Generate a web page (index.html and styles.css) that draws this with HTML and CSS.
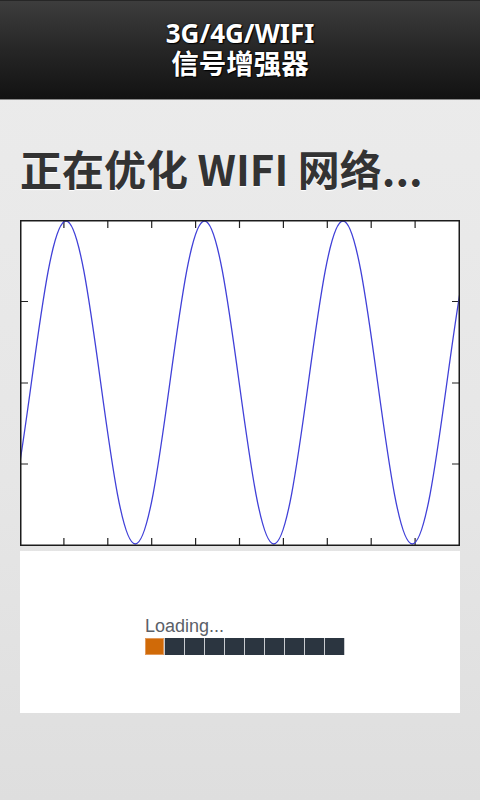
FILE: index.html
```html
<!DOCTYPE html>
<html lang="zh-CN">
<head>
<meta charset="utf-8">
<title>3G/4G/WIFI 信号增强器</title>
<link rel="stylesheet" href="styles.css">
</head>
<body>
<header class="topbar">
  <div class="topbar-title">3G/4G/WIFI<br><span class="cjk">信号增强器</span></div>
</header>
<main class="content">
  <h1 class="status">正在优化 WIFI 网络...</h1>
  <svg class="chart" width="440" height="326" viewBox="0 0 440 326" xmlns="http://www.w3.org/2000/svg">
    <rect x="0" y="0" width="440" height="326" fill="#fff"/>
    <g stroke="#222" stroke-width="1.2">
      <path d="M43.9 1V8M87.8 1V8M131.7 1V8M175.6 1V8M219.5 1V8M263.4 1V8M307.3 1V8M351.2 1V8M395.1 1V8"/>
      <path d="M43.9 325V318M87.8 325V318M131.7 325V318M175.6 325V318M219.5 325V318M263.4 325V318M307.3 325V318M351.2 325V318M395.1 325V318"/>
      <path d="M1 81.5H8M1 163H8M1 244H8M439 81.5H432M439 163H432M439 244H432"/>
    </g>
    <path fill="none" stroke="#4040d8" stroke-width="1.3" d="M-57.85 162.5
      C-46.56 245.24 -35.76 324 -23.225 324
      C-10.69 324 0.11 245.24 11.4 162.5
      C22.69 79.76 33.49 1 46.025 1
      C58.56 1 69.36 79.76 80.65 162.5
      C91.94 245.24 102.74 324 115.275 324
      C127.81 324 138.61 245.24 149.9 162.5
      C161.19 79.76 171.99 1 184.525 1
      C197.06 1 207.86 79.76 219.15 162.5
      C230.44 245.24 241.24 324 253.775 324
      C266.31 324 277.11 245.24 288.4 162.5
      C299.69 79.76 310.49 1 323.025 1
      C335.56 1 346.36 79.76 357.65 162.5
      C368.94 245.24 379.74 324 392.275 324
      C404.81 324 415.61 245.24 426.9 162.5
      C438.19 79.76 448.99 1 461.525 1"/>
    <rect x="0.75" y="0.75" width="438.5" height="324.5" fill="none" stroke="#1c1c1c" stroke-width="1.5"/>
  </svg>
  <section class="loading-box">
    <div class="loading">
      <div class="loading-label">Loading...</div>
      <div class="loading-bar">
        <span class="cell cell-on"></span>
        <span class="cell"></span>
        <span class="cell"></span>
        <span class="cell"></span>
        <span class="cell"></span>
        <span class="cell"></span>
        <span class="cell"></span>
        <span class="cell"></span>
        <span class="cell"></span>
        <span class="cell"></span>
      </div>
    </div>
  </section>
</main>
</body>
</html>
```
FILE: styles.css
```css
html, body {
  margin: 0;
  padding: 0;
}
body {
  width: 480px;
  height: 800px;
  overflow: hidden;
  background: linear-gradient(#ececec, #e6e6e6 60%, #dedede);
  font-family: "Noto Sans", "Noto Sans CJK SC", sans-serif;
}
.topbar {
  height: 100px;
  box-sizing: border-box;
  border-top: 1px solid #262626;
  border-bottom: 1px solid #8a8a8a;
  background: linear-gradient(#3d3d3d, #262626 50%, #121212);
  display: flex;
  justify-content: center;
  padding-top: 18px;
  color: #fff;
  text-shadow: 0 0 2px #000, 1px 1px 1px #000;
}
.topbar-title {
  text-align: center;
  font-family: "Noto Sans", "Noto Sans CJK SC", sans-serif;
  font-size: 26px;
  font-weight: bold;
  line-height: 29px;
}
.cjk {
  font-family: "Noto Sans CJK SC", sans-serif;
  font-size: 27.5px;
}
.content {
  padding: 0 20px;
  display: flex;
  flex-direction: column;
}
.status {
  margin: 43px 0 27px 0;
  height: 50px;
  line-height: 50px;
  font-family: "Noto Sans CJK SC", sans-serif;
  font-size: 42px;
  font-weight: bold;
  color: #333;
  text-shadow: 0 1px 1px #fff;
  white-space: nowrap;
}
.chart {
  display: block;
}
.loading-box {
  margin-top: 5px;
  height: 162px;
  background: #fff;
  display: flex;
  padding-left: 125px;
  padding-top: 66px;
  box-sizing: border-box;
}
.loading-label {
  font-family: "Liberation Sans", Arial, sans-serif;
  font-size: 18px;
  line-height: 19px;
  color: #5b6068;
}
.loading-bar {
  margin-top: 2px;
  display: flex;
  gap: 1px;
  background: #c9ccd0;
  width: 200px;
}
.cell {
  width: 19px;
  height: 17px;
  background: #2b3540;
}
.cell-on {
  background: #d06a08;
  box-shadow: inset 0 0 0 1px #e29a5c;
}
```
